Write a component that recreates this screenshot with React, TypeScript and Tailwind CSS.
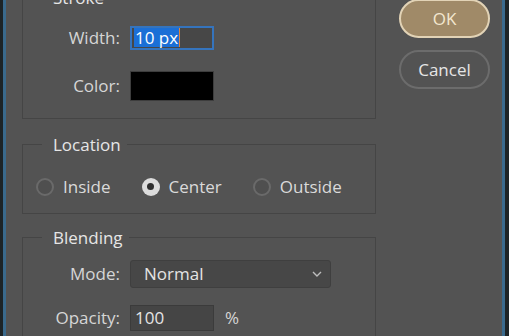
import { ReactNode } from 'react';

const FONT = { fontFamily: '"Open Sans", "Noto Sans", sans-serif' };

function Group({ title, className, children }: { title: string; className?: string; children: ReactNode }) {
  return (
    <fieldset className={`border border-[#454545] ${className ?? ''}`}>
      <legend className="ml-[19px] pl-[11px] pr-[6px] text-[17px] leading-[20px] text-[#e6e6e6]">{title}</legend>
      {children}
    </fieldset>
  );
}

function Radio({ label, checked }: { label: string; checked?: boolean }) {
  return (
    <div className="flex items-center gap-[9px]">
      {checked ? (
        <span className="flex h-[18px] w-[18px] items-center justify-center rounded-full bg-[#dcdcdc]">
          <span className="h-[7px] w-[7px] rounded-full bg-[#2e2e2e]" />
        </span>
      ) : (
        <span className="h-[18px] w-[18px] rounded-full border-2 border-[#6a6a6a] bg-[#4f4f4f]" />
      )}
      <span className="text-[17px] leading-[22px] text-[#dadada]">{label}</span>
    </div>
  );
}

export default function App() {
  return (
    <div className="flex h-[336px] w-[509px] overflow-hidden bg-[#535353]" style={FONT}>
      <div className="w-[3px] bg-[#1d2427]" />
      <div className="w-[3px] bg-[#3a6a8d]" />

      <div className="flex flex-1 items-start pl-[16px]">
        {/* left: groups */}
        <div className="w-[354px]">
          <Group title="Stroke" className="mt-[-12px] pt-[17px] pb-[17px]">
            <div className="flex flex-col gap-[20px]">
              <div className="flex items-center">
                <span className="w-[98px] pr-[1px] text-right text-[17px] text-[#d6d6d6]">Width:</span>
                <div className="ml-[9px] flex h-[24px] w-[84px] items-center border-2 border-[#3574bd] bg-[#474747] pl-[2px]">
                  <span className="bg-[#1b6fd6] px-[1px] text-[17px] leading-[19px] text-white">10 px</span>
                  <span className="h-[19px] w-[1px] bg-[#e0843a]" />
                </div>
              </div>
              <div className="flex items-center">
                <span className="w-[98px] pr-[1px] text-right text-[17px] text-[#d6d6d6]">Color:</span>
                <div className="ml-[9px] h-[30px] w-[84px] border border-[#3d3d3d] bg-black" />
              </div>
            </div>
          </Group>

          <Group title="Location" className="mt-[16px] pt-[21px] pb-[15px]">
            <div className="flex gap-[31px] pl-[13px]">
              <Radio label="Inside" />
              <Radio label="Center" checked />
              <Radio label="Outside" />
            </div>
          </Group>

          <Group title="Blending" className="mt-[14px] pt-[12px] pb-[20px]">
            <div className="flex flex-col gap-[17px]">
              <div className="flex items-center">
                <span className="w-[98px] pr-[1px] text-right text-[17px] text-[#d6d6d6]">Mode:</span>
                <div className="ml-[9px] flex h-[28px] w-[201px] items-center justify-between rounded-[3px] border border-[#3f3f3f] bg-[#474747] pl-[13px] pr-[8px]">
                  <span className="text-[17px] text-[#e4e4e4]">Normal</span>
                  <svg width="10" height="6" viewBox="0 0 10 6" fill="none">
                    <path d="M1 1l4 4 4-4" stroke="#bdbdbd" strokeWidth="1.4" />
                  </svg>
                </div>
              </div>
              <div className="flex items-center">
                <span className="w-[98px] pr-[1px] text-right text-[17px] text-[#d6d6d6]">Opacity:</span>
                <div className="ml-[9px] flex h-[26px] w-[84px] items-center border border-[#3b3b3b] bg-[#454545] pl-[4px]">
                  <span className="text-[17px] text-[#e4e4e4]">100</span>
                </div>
                <span className="ml-[11px] text-[17px] text-[#d6d6d6]">%</span>
              </div>
            </div>
          </Group>
        </div>

        {/* right: buttons */}
        <div className="ml-[23px] mt-[-1px] flex w-[91px] flex-col gap-[12px]">
          <button className="h-[39px] rounded-full border-2 border-[#e2d3b6] bg-[#a08a68] text-[17px] text-[#f3e7cf]">OK</button>
          <button className="h-[39px] rounded-full border-2 border-[#6c6c6c] text-[17px] text-[#e6e6e6]">Cancel</button>
        </div>
      </div>

      <div className="w-[3px] bg-[#3a6a8d]" />
      <div className="w-[4px] bg-[#1d2427]" />
    </div>
  );
}
